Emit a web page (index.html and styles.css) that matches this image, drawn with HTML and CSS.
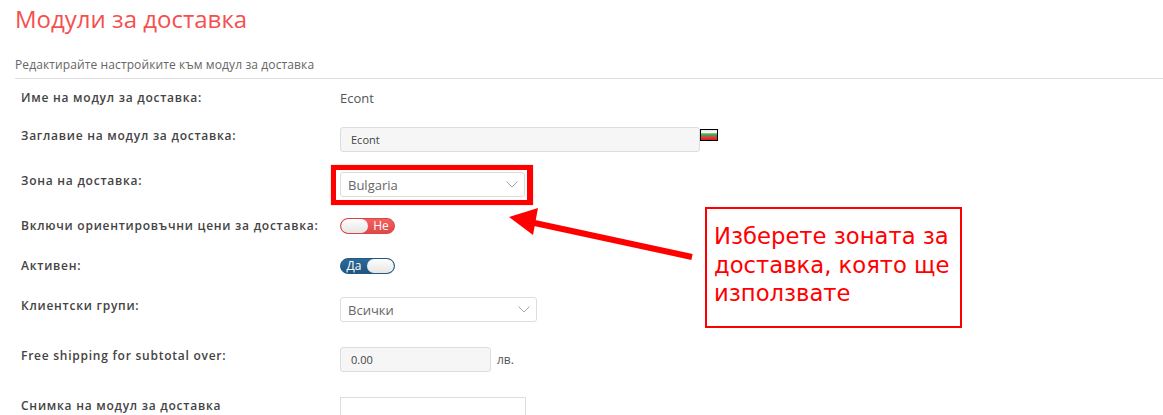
FILE: index.html
```html
<!DOCTYPE html>
<html lang="bg">

<head>
    <meta charset="UTF-8">
    <title>Модули за доставка</title>
    <meta name="viewport" content="width=device-width, initial-scale=1.0">
    <link rel="stylesheet" href="styles.css">
</head>

<body>
    <h1 class="page-title">Модули за доставка</h1>
    <div class="page-subtitle">Редактирайте настройките към модул за доставка</div>

    <div class="module-form">
        <label class="form-label">Име на модул за доставка:</label>
        <div class="form-value">Econt</div>

        <label class="form-label">Заглавие на модул за доставка:</label>
        <div class="form-control-line">
            <div class="text-input title-input">Econt</div>
            <span class="flag"></span>
        </div>

        <label class="form-label">Зона на доставка:</label>
        <div class="select-box zone-select">
            <span>Bulgaria</span>
            <svg class="chevron" width="12" height="7" viewBox="0 0 12 7">
                <path d="M0.5 0.5 L6 6 L11.5 0.5" fill="none" stroke="#aaa" stroke-width="1" />
            </svg>
        </div>

        <label class="form-label form-label-short">Включи ориентировъчни цени за доставка:</label>
        <div class="toggle toggle-off">
            <span class="toggle-knob"></span>
            <span class="toggle-text">Не</span>
        </div>

        <label class="form-label form-label-short">Активен:</label>
        <div class="toggle toggle-on">
            <span class="toggle-text">Да</span>
            <span class="toggle-knob"></span>
        </div>

        <label class="form-label">Клиентски групи:</label>
        <div class="select-box group-select">
            <span>Всички</span>
            <svg class="chevron" width="12" height="7" viewBox="0 0 12 7">
                <path d="M0.5 0.5 L6 6 L11.5 0.5" fill="none" stroke="#aaa" stroke-width="1" />
            </svg>
        </div>

        <label class="form-label">Free shipping for subtotal over:</label>
        <div class="form-control-line">
            <div class="text-input price-input">0.00</div>
            <span class="unit">лв.</span>
        </div>

        <label class="form-label">Снимка на модул за доставка</label>
        <div class="image-box"></div>
    </div>

    <!-- annotations on top of the form -->
    <div class="mark-box"></div>
    <svg class="mark-arrow" width="220" height="65" viewBox="0 0 220 65">
        <path d="M29 17 L58 8 L53 35 Z" fill="#f00" />
        <path d="M50 22 L212 57" stroke="#f00" stroke-width="6" fill="none" />
    </svg>
    <div class="callout">Изберете зоната за доставка, която ще използвате</div>
</body>

</html>
```

FILE: styles.css
```css
html,
body {
    height: 100%;
    margin: 0;
    padding: 0;
}

body {
    position: relative;
    overflow: hidden;
    box-sizing: border-box;
    padding: 0 0 0 15px;
    font-family: 'Open Sans', Arial, sans-serif;
    font-size: 12px;
    color: #444;
    background: #fff;
}

.page-title {
    margin: 0;
    padding-top: 2px;
    height: 50px;
    box-sizing: border-box;
    font-size: 24px;
    line-height: 34px;
    font-weight: 400;
    color: #f55050;
}

.page-subtitle {
    height: 29px;
    box-sizing: border-box;
    padding-top: 6px;
    line-height: 17px;
    letter-spacing: 0.11px;
    color: #666;
    border-bottom: 1px solid #ddd;
}

.module-form {
    display: grid;
    grid-template-columns: 319px 1fr;
    grid-template-rows: 38px 45px 46px 40px 39px 50px 50px 18px;
    margin-top: 10px;
    padding-left: 6px;
}

.form-label {
    line-height: 18px;
    font-weight: 600;
    letter-spacing: 0.75px;
    color: #444;
    white-space: nowrap;
}

.form-label-short {
    line-height: 16px;
}

.form-value {
    font-size: 13px;
    line-height: 18px;
    color: #555;
}

.form-control-line {
    display: flex;
    align-items: flex-start;
}

.text-input,
.select-box,
.image-box {
    box-sizing: border-box;
    height: 25px;
    border: 1px solid #ddd;
    border-radius: 3px;
}

.text-input {
    padding-left: 10px;
    font-size: 11px;
    line-height: 24px;
    color: #444;
    background: #f6f6f6;
}

.title-input {
    width: 360px;
}

.price-input {
    width: 151px;
}

.flag {
    box-sizing: border-box;
    width: 18px;
    height: 12px;
    margin-top: 2px;
    border: 1px solid #000;
    background: linear-gradient(#e8e8e8 0, #fff 30%, #6db56d 36%, #2f9a4d 60%, #f04040 68%, #d81c1c 100%);
}

.unit {
    margin-left: 6px;
    line-height: 25px;
    color: #555;
}

.select-box {
    display: flex;
    align-items: center;
    justify-content: space-between;
    padding: 0 6px 0 7px;
    font-size: 13px;
    color: #666;
    background: #fff;
}

.zone-select {
    width: 185px;
}

.group-select {
    width: 197px;
}

.toggle {
    box-sizing: border-box;
    display: flex;
    align-items: center;
    width: 55px;
    height: 16px;
    border-radius: 8px;
    overflow: hidden;
    color: #fff;
    font-size: 12px;
}

.toggle-off {
    background: linear-gradient(#f26060, #e04848);
    border: 1px solid #d84545;
}

.toggle-on {
    background: linear-gradient(#2c6a9a, #1f5580);
    border: 1px solid #23597f;
}

.toggle-knob {
    width: 27px;
    height: 14px;
    border-radius: 7px;
    background: linear-gradient(#fdfdfd, #e6e6e6);
}

.toggle-text {
    flex: 1;
    text-align: center;
    line-height: 14px;
}

.image-box {
    width: 186px;
    height: 18px;
    border-bottom: none;
    border-radius: 0;
}

.mark-box {
    position: absolute;
    left: 331px;
    top: 165px;
    box-sizing: border-box;
    width: 202px;
    height: 40px;
    border: 5px solid #f00;
    border-right-width: 6px;
    box-shadow: 0 0 1px rgba(255, 0, 0, 0.5);
}

.mark-arrow {
    position: absolute;
    left: 480px;
    top: 200px;
}

.callout {
    position: absolute;
    left: 705px;
    top: 207px;
    box-sizing: border-box;
    width: 257px;
    height: 121px;
    padding: 13px 7px;
    border: 2px solid #f00;
    font-family: 'DejaVu Sans', sans-serif;
    font-size: 22.7px;
    line-height: 28.5px;
    color: #f00;
    background: #fff;
}
```
